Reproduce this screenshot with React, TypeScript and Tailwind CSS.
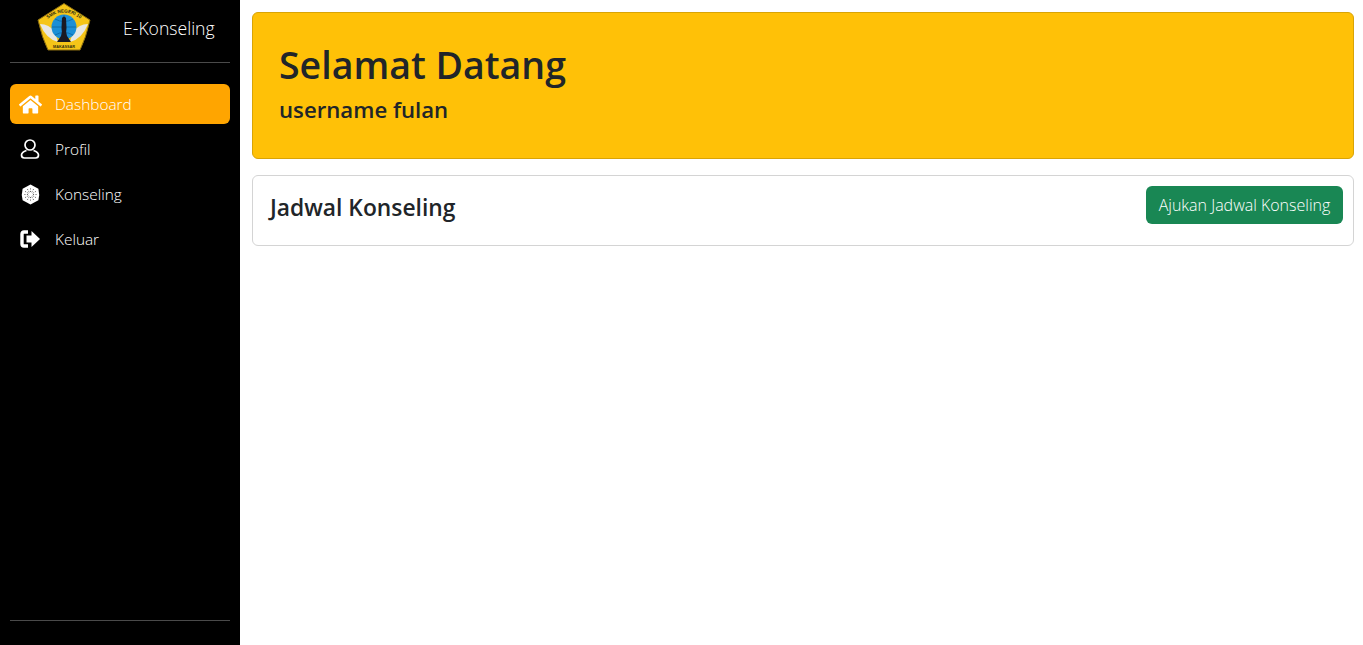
import React from 'react';
import { FaHome } from 'react-icons/fa';

const Logo = () => (
  <svg width="56" height="50" viewBox="0 0 56 50" className="block">
    <path d="M28 1.5 L54 18 Q50 36 44 48 L12 48 Q6 36 2 18 Z" fill="#f5c518" stroke="#8a6d10" strokeWidth="1" strokeLinejoin="round" />
    <defs>
      <path id="logo-arc" d="M7 21 Q28 0 49 21" />
    </defs>
    <text fontSize="4.6" fontWeight="700" fill="#2a2a10" fontFamily="'Liberation Sans', sans-serif">
      <textPath href="#logo-arc" startOffset="50%" textAnchor="middle">SMK NEGERI 10</textPath>
    </text>
    <path d="M4 22 Q13 22 19 30 L22 40 Q10 37 4 22 Z" fill="#e8e8e4" />
    <path d="M52 22 Q43 22 37 30 L34 40 Q46 37 52 22 Z" fill="#e8e8e4" />
    <circle cx="28" cy="25" r="12.5" fill="#1c8fd6" />
    <path d="M16 25 H40 M28 13 V37 M19 17 Q28 22 37 17 M19 33 Q28 28 37 33" stroke="#0d5e99" strokeWidth="0.7" fill="none" />
    <path d="M26 16 Q28 13 30 16 L30.5 26 Q29.5 30 31 34 L35 40 H21 L25 34 Q26.5 30 25.5 26 Z" fill="#1a1a22" />
    <text x="28" y="46" fontSize="3.8" fontWeight="700" fill="#33300f" textAnchor="middle" fontFamily="'Liberation Sans', sans-serif">MAKASSAR</text>
  </svg>
);

// thin outline person, wider body than the fa one
const UserIcon = () => (
  <svg width="20" height="20" viewBox="0 0 20 20" fill="none" stroke="#fff" strokeWidth="1.7" className="block">
    <circle cx="10" cy="6" r="5" />
    <path d="M6.5 11.5 C3.5 12.5 1.5 13.5 1.5 16 C1.5 18 2.5 19 4.5 19 H15.5 C17.5 19 18.5 18 18.5 16 C18.5 13.5 16.5 12.5 13.5 11.5" />
  </svg>
);

// solid wheel: hexagon-ish blob with thin radial cuts and a pale hub
const Wheel = () => {
  const spokes = [0, 30, 60, 90, 120, 150, 180, 210, 240, 270, 300, 330];
  return (
    <svg width="19" height="21" viewBox="0 0 18 20" className="block">
      <path d="M9 0.5 L16.5 4.5 Q18 10 16.5 15.5 L9 19.5 L1.5 15.5 Q0 10 1.5 4.5 Z" fill="#fff" />
      {spokes.map((a) => (
        <line key={a} x1="9" y1="10" x2="9" y2="3.5" stroke="#000" strokeWidth="0.6" strokeDasharray="1 1.4" transform={`rotate(${a} 9 10)`} />
      ))}
      <circle cx="9" cy="10" r="1.8" fill="#fff" />
    </svg>
  );
};

const LogoutIcon = () => (
  <svg width="20" height="18" viewBox="0 0 20 18" className="block">
    <path d="M8 2 H4 Q2 2 2 4 V14 Q2 16 4 16 H8" fill="none" stroke="#fff" strokeWidth="3.4" />
    <path d="M6.5 5.5 H11.5 V1 L20 9 L11.5 17 V12.5 H6.5 Z" fill="#fff" />
  </svg>
);

const menu = [
  { label: 'Dashboard', icon: <FaHome size={23} />, active: true },
  { label: 'Profil', icon: <UserIcon />, active: false },
  { label: 'Konseling', icon: <Wheel />, active: false },
  { label: 'Keluar', icon: <LogoutIcon />, active: false },
];

export default function App() {
  return (
    <div className="flex h-screen bg-white font-['Open_Sans','Noto_Sans',sans-serif] text-[#212529]">
      <aside className="flex w-[240px] shrink-0 flex-col bg-black px-[10px] text-white">
        <div className="flex h-[63px] items-start border-b border-[#4a4a4a]">
          <div className="ml-[26px] mt-[2px]">
            <Logo />
          </div>
          <span className="ml-[31px] mt-[16px] text-[17.6px] leading-[24px] font-light">E-Konseling</span>
        </div>
        <nav className="mt-[21px] flex flex-col gap-[5px]">
          {menu.map((item) => (
            <div
              key={item.label}
              className={`flex h-[40px] items-center rounded-[6px] text-[15.4px] font-light ${item.active ? 'bg-[#ffa500]' : ''}`}
            >
              <span className="flex w-[45px] shrink-0 justify-center pr-[5px]">{item.icon}</span>
              <span className="pt-[2px]">{item.label}</span>
            </div>
          ))}
        </nav>
        <div className="mt-auto mb-[24px] border-t border-[#4a4a4a]" />
      </aside>
      <main className="flex min-w-0 flex-1 flex-col gap-[16px] pt-[12px] pr-[9px] pl-[12px]">
        <section className="h-[147px] rounded-[6px] border border-[#d9a406] bg-[#ffc107] px-[26px] pt-[27px]">
          <h1 className="text-[37.5px] leading-[50px] font-semibold">Selamat Datang</h1>
          <h2 className="mt-[5px] text-[22.2px] leading-[30px] font-semibold">username fulan</h2>
        </section>
        <section className="flex h-[71px] items-start justify-between rounded-[6px] border border-[#d4d4d4] bg-white pt-[10px] pr-[10px] pl-[16px]">
          <h3 className="mt-[5px] ml-[1px] text-[22.8px] leading-[34px] font-semibold">Jadwal Konseling</h3>
          <button className="h-[38px] w-[197px] rounded-[6px] bg-[#198754] text-[16px] font-light text-white">
            Ajukan Jadwal Konseling
          </button>
        </section>
      </main>
    </div>
  );
}
